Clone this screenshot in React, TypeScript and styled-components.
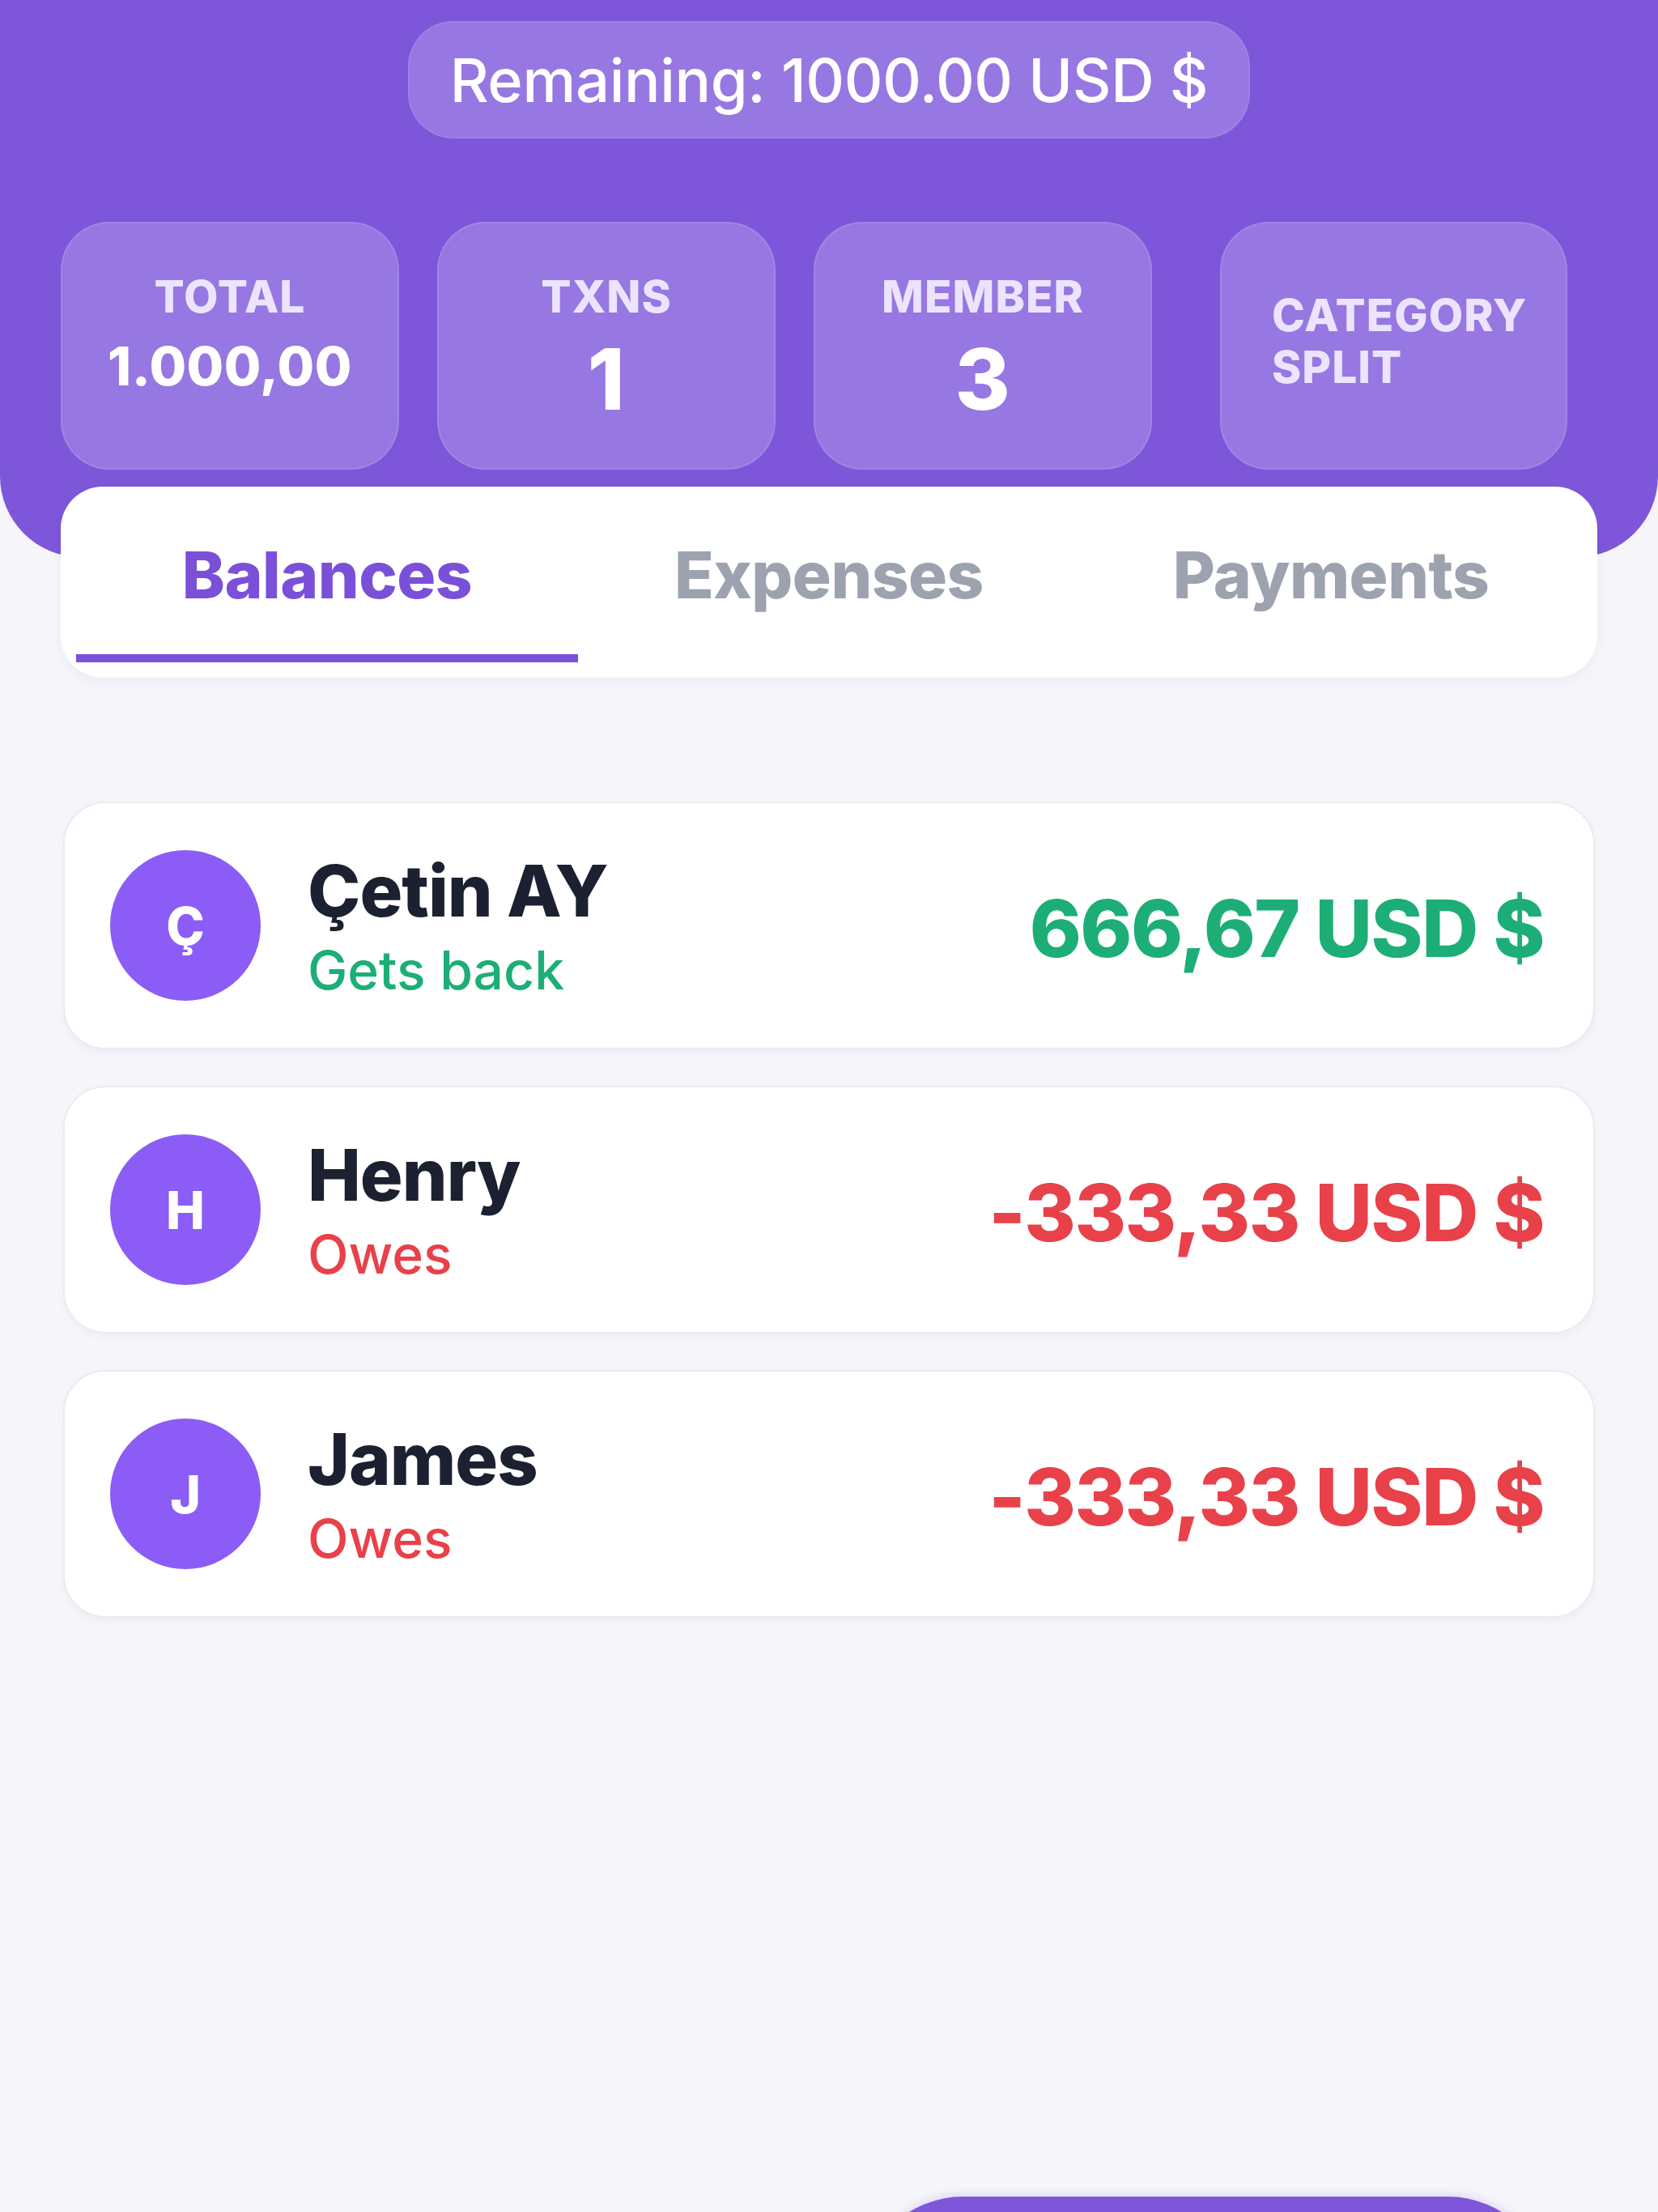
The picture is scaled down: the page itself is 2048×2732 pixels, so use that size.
import styled, { createGlobalStyle } from 'styled-components';

const GlobalStyle = createGlobalStyle`
	html, body {
		margin: 0;
		padding: 0;
		background: #f5f5fa;
	}
	* {
		box-sizing: border-box;
	}
`;

const Page = styled.div`
	position: relative;
	width: 2048px;
	height: 2732px;
	overflow: hidden;
	background: #f5f5fa;
	font-family: Inter, 'Noto Sans', 'Liberation Sans', sans-serif;
`;

const Header = styled.div`
	height: 688px;
	padding-top: 26px;
	background: #7e56da;
	border-radius: 0 0 100px 100px;
	display: flex;
	flex-direction: column;
	align-items: center;
`;

const RemainingPill = styled.div`
	width: 1040px;
	height: 145px;
	display: flex;
	align-items: center;
	justify-content: center;
	border-radius: 56px;
	background: rgba(255, 255, 255, 0.2);
	border: 2px solid rgba(255, 255, 255, 0.08);
	color: #ffffff;
	font-size: 74px;
	font-weight: 500;
	letter-spacing: -0.3px;
`;

const StatRow = styled.div`
	align-self: stretch;
	display: flex;
	gap: 47px;
	margin: 103px 0 0 75px;
`;

const StatCard = styled.div<{ $wide?: boolean }>`
	width: ${(p) => (p.$wide ? '429px' : '418px')};
	height: 306px;
	margin-left: ${(p) => (p.$wide ? '37px' : '0')};
	border-radius: 60px;
	background: rgba(255, 255, 255, 0.2);
	border: 2px solid rgba(255, 255, 255, 0.1);
	display: flex;
	flex-direction: column;
	align-items: ${(p) => (p.$wide ? 'flex-start' : 'center')};
	justify-content: ${(p) => (p.$wide ? 'center' : 'flex-start')};
	padding: ${(p) => (p.$wide ? '0 0 12px 62px' : '58px 0 0')};
`;

const StatLabel = styled.div`
	color: #ece4fe;
	font-size: 55px;
	font-weight: 800;
	letter-spacing: 1px;
	line-height: 64px;
	text-transform: uppercase;
`;

const StatValue = styled.div<{ $big?: boolean }>`
	color: #ffffff;
	font-weight: 800;
	font-size: ${(p) => (p.$big ? '104px' : '66px')};
	line-height: ${(p) => (p.$big ? '116px' : '88px')};
	margin-top: ${(p) => (p.$big ? '12px' : '10px')};
	letter-spacing: 0.5px;
`;

const TabCard = styled.div`
	margin: -87px 75px 0;
	height: 236px;
	padding: 19px;
	background: #ffffff;
	border-radius: 52px;
	box-shadow: 0 6px 16px rgba(40, 30, 90, 0.04);
	display: flex;
	position: relative;
`;

const Tab = styled.div<{ $active?: boolean }>`
	flex: 1;
	display: flex;
	align-items: center;
	justify-content: center;
	padding-bottom: 10px;
	font-size: 80px;
	font-weight: 800;
	letter-spacing: -0.5px;
	color: ${(p) => (p.$active ? '#7b50d8' : '#9ca3af')};
	border-bottom: 10px solid ${(p) => (p.$active ? '#7b50d8' : 'transparent')};
`;

const BalanceList = styled.div`
	margin: 153px 78px 0;
	display: flex;
	flex-direction: column;
	gap: 45px;
`;

const BalanceCard = styled.div`
	height: 306px;
	display: flex;
	align-items: center;
	padding: 0 61px 0 56px;
	background: #ffffff;
	border: 2px solid #ebebf1;
	border-radius: 52px;
	box-shadow: 0 4px 10px rgba(30, 30, 60, 0.04);
`;

const Avatar = styled.div`
	width: 186px;
	height: 186px;
	border-radius: 50%;
	background: #8b5cf6;
	color: #ffffff;
	display: flex;
	align-items: center;
	justify-content: center;
	font-size: 64px;
	font-weight: 800;
	flex-shrink: 0;
`;

const PersonInfo = styled.div`
	display: flex;
	flex-direction: column;
	margin-left: 58px;
	gap: 12px;
`;

const PersonName = styled.div`
	color: #1c2131;
	font-size: 88px;
	font-weight: 800;
	line-height: 98px;
	letter-spacing: -1px;
`;

const PersonStatus = styled.div<{ $positive: boolean }>`
	color: ${(p) => (p.$positive ? '#1dae78' : '#e8414a')};
	font-size: 66px;
	font-weight: 500;
	line-height: 74px;
`;

const Amount = styled.div<{ $positive: boolean }>`
	margin-left: auto;
	margin-top: 6px;
	color: ${(p) => (p.$positive ? '#1dae78' : '#e8414a')};
	font-size: 97px;
	font-weight: 800;
	letter-spacing: -1.5px;
`;

const FloatingButton = styled.div`
	position: absolute;
	left: 1065px;
	top: 2713px;
	width: 848px;
	height: 250px;
	border-radius: 124px;
	background: #7e56da;
	box-shadow: 0 -4px 10px rgba(126, 86, 218, 0.15);
`;

interface Stat {
	label: string;
	value?: string;
	big?: boolean;
}

interface Balance {
	initial: string;
	name: string;
	amount: string;
	positive: boolean;
}

const stats: Array<Stat> = [
	{ label: 'Total', value: '1.000,00' },
	{ label: 'Txns', value: '1', big: true },
	{ label: 'Member', value: '3', big: true },
];

const balances: Array<Balance> = [
	{ initial: 'Ç', name: 'Çetin AY', amount: '666,67 USD $', positive: true },
	{ initial: 'H', name: 'Henry', amount: '-333,33 USD $', positive: false },
	{ initial: 'J', name: 'James', amount: '-333,33 USD $', positive: false },
];

export default function App() {
	return (
		<>
			<GlobalStyle />
			<Page>
				<Header>
					<RemainingPill>Remaining: 1000.00 USD $</RemainingPill>
					<StatRow>
						{stats.map((stat) => (
							<StatCard key={stat.label}>
								<StatLabel>{stat.label}</StatLabel>
								<StatValue $big={stat.big}>{stat.value}</StatValue>
							</StatCard>
						))}
						<StatCard $wide>
							<StatLabel>Category</StatLabel>
							<StatLabel>Split</StatLabel>
						</StatCard>
					</StatRow>
				</Header>
				<TabCard>
					<Tab $active>Balances</Tab>
					<Tab>Expenses</Tab>
					<Tab>Payments</Tab>
				</TabCard>
				<BalanceList>
					{balances.map((item) => (
						<BalanceCard key={item.name}>
							<Avatar>{item.initial}</Avatar>
							<PersonInfo>
								<PersonName>{item.name}</PersonName>
								<PersonStatus $positive={item.positive}>
									{item.positive ? 'Gets back' : 'Owes'}
								</PersonStatus>
							</PersonInfo>
							<Amount $positive={item.positive}>{item.amount}</Amount>
						</BalanceCard>
					))}
				</BalanceList>
				<FloatingButton />
			</Page>
		</>
	);
}
